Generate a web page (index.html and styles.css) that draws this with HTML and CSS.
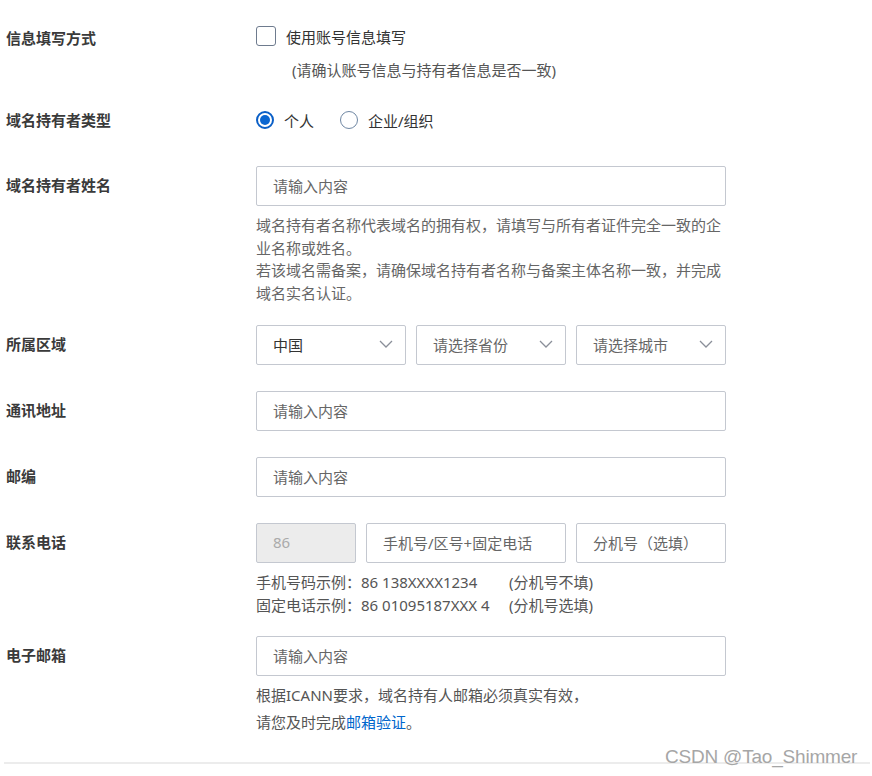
FILE: index.html
```html
<!DOCTYPE html>
<html lang="zh">
<head>
<meta charset="utf-8">
<link rel="stylesheet" href="styles.css">
</head>
<body>
<div class="page">
  <form class="form">
    <div class="row row-check">
      <div class="label label-sm">信息填写方式</div>
      <div class="field">
        <label class="check"><span class="box"></span><span>使用账号信息填写</span></label>
        <div class="check-note">(请确认账号信息与持有者信息是否一致)</div>
      </div>
    </div>

    <div class="row row-radio">
      <div class="label label-sm">域名持有者类型</div>
      <div class="field radios">
        <label class="radio"><span class="dot on"></span><span>个人</span></label>
        <label class="radio"><span class="dot"></span><span>企业/组织</span></label>
      </div>
    </div>

    <div class="row row-name">
      <div class="label">域名持有者姓名</div>
      <div class="field">
        <div class="input"><span class="ph">请输入内容</span></div>
        <div class="help">域名持有者名称代表域名的拥有权，请填写与所有者证件完全一致的企业名称或姓名。<br>若该域名需备案，请确保域名持有者名称与备案主体名称一致，并完成域名实名认证。</div>
      </div>
    </div>

    <div class="row row-plain">
      <div class="label">所属区域</div>
      <div class="field selects">
        <div class="input select"><span class="val">中国</span><svg class="chev" viewBox="0 0 14 8"><path d="M1 1 L7 7 L13 1"/></svg></div>
        <div class="input select"><span class="ph">请选择省份</span><svg class="chev" viewBox="0 0 14 8"><path d="M1 1 L7 7 L13 1"/></svg></div>
        <div class="input select"><span class="ph">请选择城市</span><svg class="chev" viewBox="0 0 14 8"><path d="M1 1 L7 7 L13 1"/></svg></div>
      </div>
    </div>

    <div class="row row-plain">
      <div class="label">通讯地址</div>
      <div class="field"><div class="input"><span class="ph">请输入内容</span></div></div>
    </div>

    <div class="row row-plain">
      <div class="label">邮编</div>
      <div class="field"><div class="input"><span class="ph">请输入内容</span></div></div>
    </div>

    <div class="row row-phone">
      <div class="label">联系电话</div>
      <div class="field">
        <div class="phones">
          <div class="input code"><span>86</span></div>
          <div class="input tel"><span class="ph">手机号/区号+固定电话</span></div>
          <div class="input ext"><span class="ph">分机号（选填）</span></div>
        </div>
        <div class="hints">
          <div><span class="hint-a">手机号码示例：86 138XXXX1234</span><span>(分机号不填)</span></div>
          <div><span class="hint-a">固定电话示例：86 01095187XXX 4</span><span>(分机号选填)</span></div>
        </div>
      </div>
    </div>

    <div class="row row-email">
      <div class="label">电子邮箱</div>
      <div class="field">
        <div class="input"><span class="ph">请输入内容</span></div>
        <div class="email-help">
          <p>根据ICANN要求，域名持有人邮箱必须真实有效，</p>
          <p>请您及时完成<a class="link">邮箱验证</a>。</p>
        </div>
      </div>
    </div>
  </form>
  <div class="divider"></div>
  <div class="watermark">CSDN @Tao_Shimmer</div>
</div>
</body>
</html>
```

FILE: styles.css
```css
* { box-sizing: border-box; }
html, body {
  margin: 0;
  padding: 0;
  background: #fff;
}
body {
  font-family: "Noto Sans", "Noto Sans CJK SC", sans-serif;
  font-size: 15px;
  color: #333;
}
.page {
  position: relative;
  width: 872px;
  height: 776px;
  padding-top: 26px;
}
.form {
  padding-left: 6px;
}
.row {
  display: grid;
  grid-template-columns: 250px 470px;
}
.label {
  font-weight: bold;
  color: #3a3a3a;
  line-height: 38px;
  white-space: nowrap;
}
.label-sm {
  line-height: 24px;
}
.row-radio { margin-top: 27px; }
.row-name { margin-top: 34px; }
.row-plain { margin-top: 21px; }
.row-plain + .row-plain { margin-top: 26px; }
.row-phone { margin-top: 26px; }
.row-email { margin-top: 20px; }

/* checkbox */
.check {
  display: flex;
  align-items: center;
  gap: 10px;
  height: 20px;
  color: #333;
}
.box {
  width: 20px;
  height: 20px;
  border: 1px solid #6e7b8e;
  border-radius: 3px;
  background: #fff;
}
.check-note {
  margin-top: 13px;
  padding-left: 36px;
  line-height: 22px;
  color: #555;
}

/* radio */
.radios {
  display: flex;
  align-items: center;
  gap: 26px;
  height: 24px;
}
.radio {
  display: flex;
  align-items: center;
  gap: 10px;
  color: #333;
}
.dot {
  width: 18px;
  height: 18px;
  border: 1px solid #6f87a3;
  border-radius: 50%;
  display: flex;
  align-items: center;
  justify-content: center;
  background: #fff;
}
.dot.on {
  border: 2px solid #0a5fc7;
}
.dot.on::after {
  content: "";
  width: 10px;
  height: 10px;
  border-radius: 50%;
  background: #0a66d1;
}

/* inputs */
.input {
  height: 40px;
  border: 1px solid #c4c8d0;
  border-radius: 2px;
  background: #fff;
  display: flex;
  align-items: center;
  padding-left: 16px;
  padding-right: 12px;
  padding-bottom: 2px;
}
.ph { color: #666; }
.val { color: #333; }
.help {
  margin-top: 8px;
  line-height: 22.5px;
  color: #666;
}

.selects {
  display: grid;
  grid-template-columns: 150px 150px 150px;
  gap: 10px;
}
.select {
  justify-content: space-between;
}
.chev {
  width: 14px;
  height: 8px;
  fill: none;
  stroke: #8a8f99;
  stroke-width: 1.3;
}

.phones {
  display: grid;
  grid-template-columns: 100px 200px 150px;
  gap: 10px;
}
.code {
  background: #ececec;
  color: #aaa;
}
.hints {
  margin-top: 8px;
  line-height: 22.5px;
  color: #555;
}
.hint-a {
  display: inline-block;
  width: 253px;
}

.email-help {
  margin-top: 6px;
  color: #555;
}
.email-help p {
  margin: 0;
  line-height: 27px;
}
.link {
  color: #0066cc;
}

.divider {
  position: absolute;
  left: 4px;
  right: 2px;
  top: 762px;
  height: 2px;
  background: #ececec;
}
.watermark {
  position: absolute;
  left: 665px;
  top: 746px;
  font-family: "Liberation Sans", sans-serif;
  font-size: 19px;
  color: #a6a6a6;
  letter-spacing: -0.2px;
}
```
